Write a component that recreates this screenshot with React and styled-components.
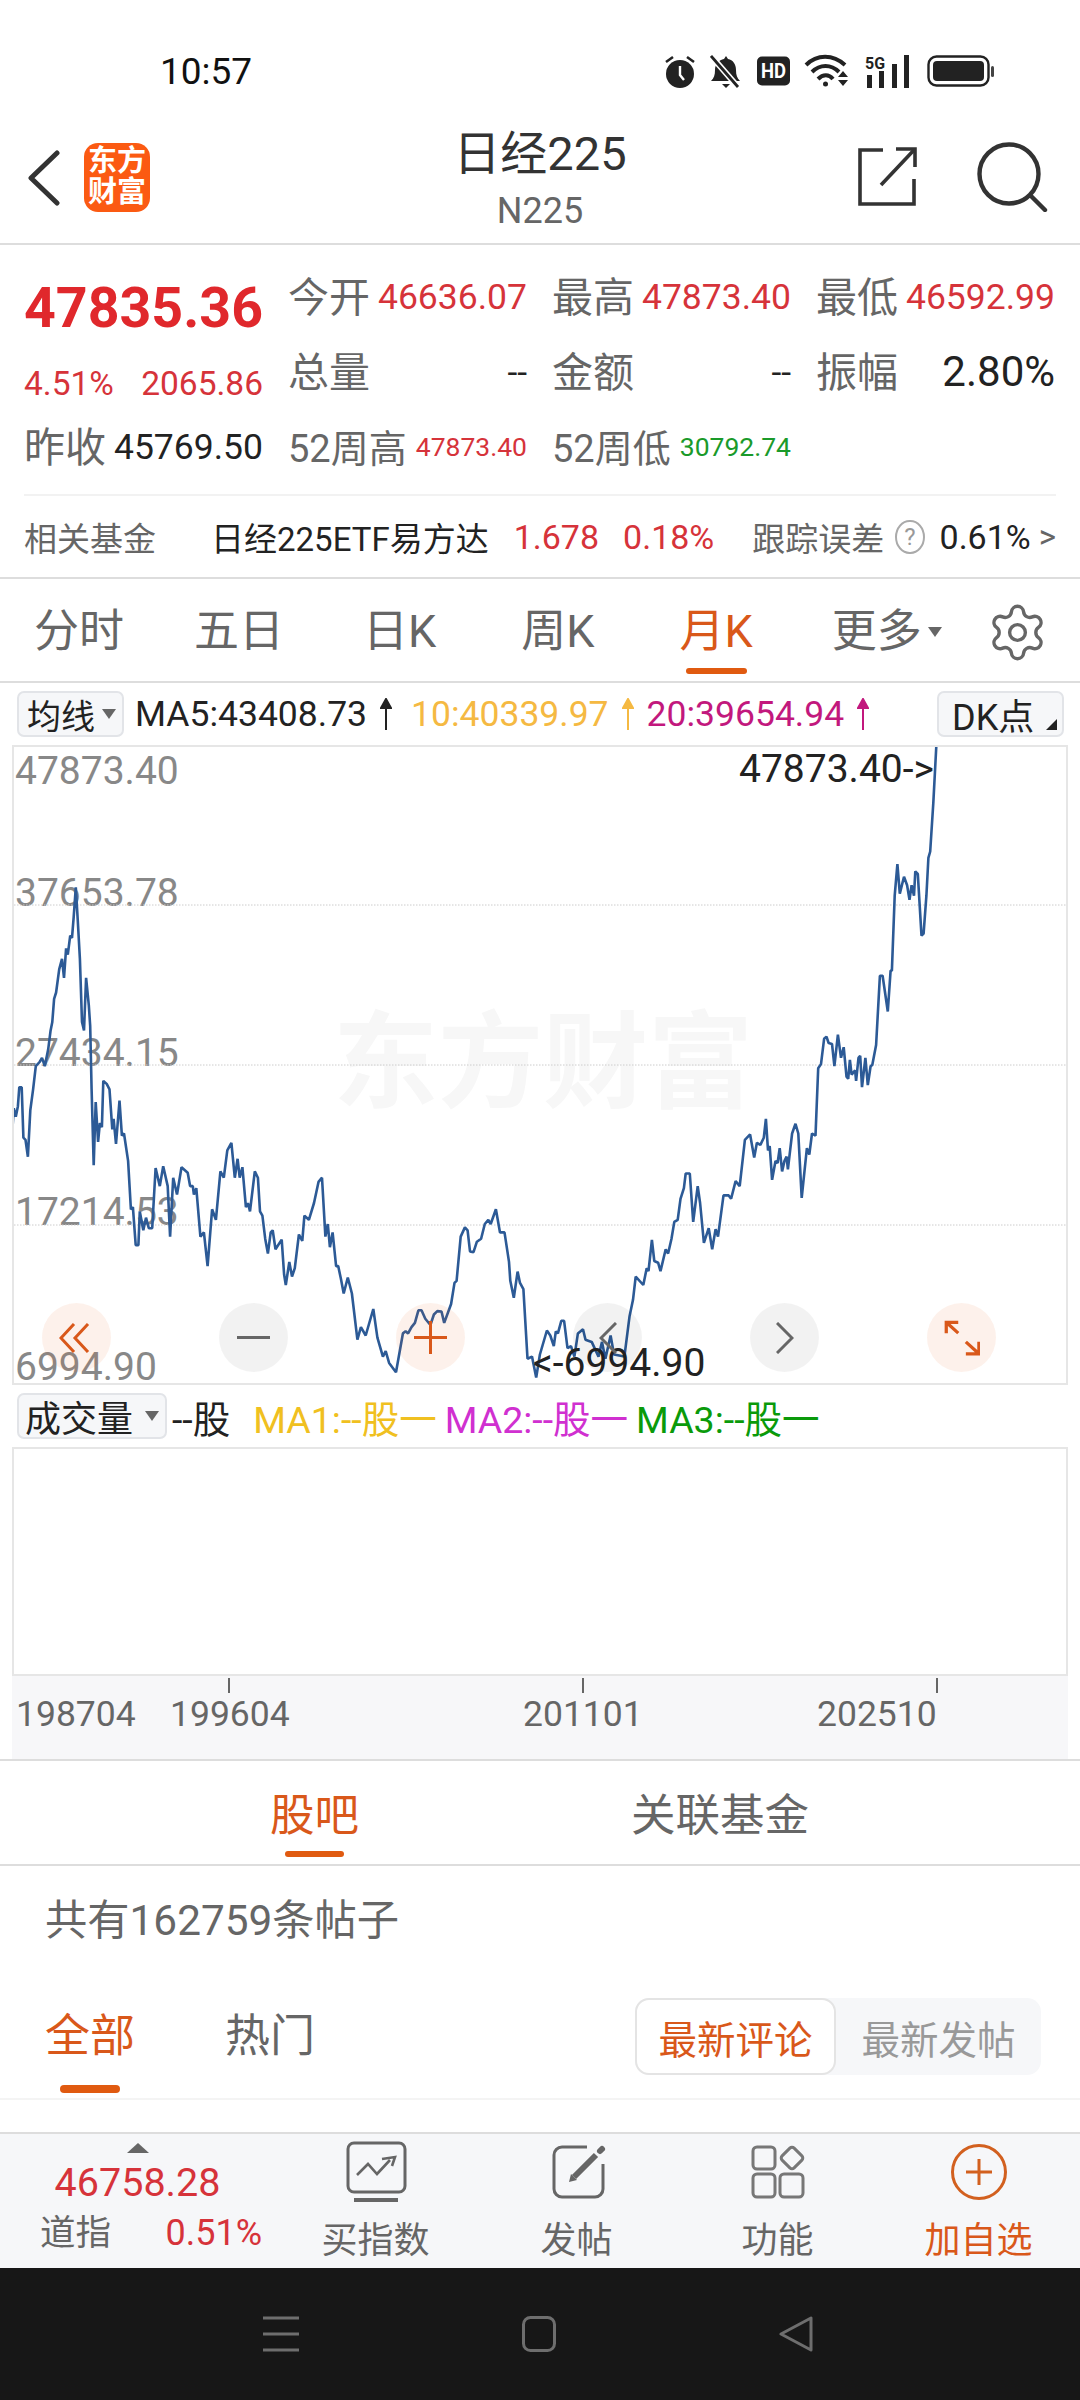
import styled, { createGlobalStyle } from 'styled-components';
import { Settings } from 'lucide-react';

const ORANGE = '#d9581a';
const BAR = '#e05a10';
const RED = '#d6333a';
const GREEN = '#1a9a2a';
const GRAY = '#666';
const DARK = '#222';

const Global = createGlobalStyle`
    html, body {
        margin: 0;
        padding: 0;
        background: #fff;
    }
    body {
        font-family: Roboto, "Noto Sans CJK SC", sans-serif;
        color: ${DARK};
    }
    * {
        box-sizing: border-box;
    }
`;

const Page = styled.div`
    width: 1080px;
    height: 2400px;
    display: flex;
    flex-direction: column;
    overflow: hidden;
    background: #fff;
`;

const StatusBar = styled.div`
    height: 110px;
    flex: none;
    display: flex;
    align-items: center;
    padding: 32px 85px 0 160px;
    font-size: 37px;
    color: #111;
`;

const StatusIcons = styled.div`
    margin-left: auto;
    display: flex;
    align-items: center;
    gap: 14.5px;
    svg {
        display: block;
    }
`;

const Header = styled.div`
    height: 135px;
    flex: none;
    border-bottom: 2px solid #ddd;
    display: flex;
    align-items: center;
    padding: 0 32px 0 27px;
    position: relative;
`;

const BackWrap = styled.div`
    margin-top: 3px;
    svg {
        display: block;
    }
`;

const Logo = styled.div`
    width: 66px;
    height: 69px;
    margin: 2px 0 0 24px;
    background: #fb5a12;
    border-radius: 14px;
    color: #fff;
    font-size: 29px;
    line-height: 31px;
    font-weight: 700;
    text-align: center;
    padding-top: 3px;
`;

const TitleBlock = styled.div`
    flex: 1;
    text-align: center;
    padding-left: 72px;
    margin-top: 4px;
`;

const Title = styled.div`
    font-size: 47px;
    line-height: 56px;
    color: #333;
`;

const Code = styled.div`
    font-size: 36px;
    line-height: 42px;
    color: ${GRAY};
    margin-top: 8px;
`;

const HeaderActions = styled.div`
    display: flex;
    align-items: center;
    gap: 60px;
`;

const QuoteGrid = styled.div`
    display: grid;
    grid-template-columns: repeat(4, 239px);
    column-gap: 25px;
    grid-auto-rows: 75px;
    padding: 14px 0 0 24px;
    height: 240px;
    flex: none;
`;

const Cell = styled.div`
    display: flex;
    align-items: center;
    justify-content: space-between;
    white-space: nowrap;
    padding-top: ${(p) => p.$top || 0}px;
`;

const Price = styled.span`
    font-size: 55.5px;
    font-weight: 700;
    color: #e0282c;
`;

const Label = styled.span`
    font-size: ${(p) => (p.$small ? 38 : 41)}px;
    color: ${GRAY};
    padding-bottom: ${(p) => (p.$small ? 2 : 6)}px;
`;

const Value = styled.span`
    font-size: ${(p) => p.$size || 35.5}px;
    color: ${(p) => p.$color || RED};
`;

const Divider = styled.div`
    height: 2px;
    flex: none;
    margin: 9px 24px 0;
    background: #f2f2f2;
`;

const FundRow = styled.div`
    height: 83px;
    flex: none;
    border-bottom: 2px solid #ddd;
    display: flex;
    align-items: center;
    padding: 0 24px;
    font-size: 33px;
    white-space: nowrap;
`;

const FundText = styled.span`
    color: ${(p) => p.$color || GRAY};
    margin-left: ${(p) => p.$ml || 0}px;
    font-size: ${(p) => p.$size || 33}px;
`;

const HelpDot = styled.span`
    width: 34px;
    height: 34px;
    margin-left: 11px;
    border: 2px solid #aaa;
    border-radius: 50%;
    color: #999;
    font-size: 24px;
    line-height: 30px;
    text-align: center;
`;

const PeriodRow = styled.div`
    height: 104px;
    flex: none;
    border-bottom: 2px solid #ddd;
    display: flex;
    align-items: flex-start;
    padding: 28px 0 0 34px;
`;

const PeriodTab = styled.div`
    margin-left: ${(p) => p.$ml || 0}px;
    display: flex;
    flex-direction: column;
    align-items: center;
    font-size: 45px;
    line-height: 50px;
    color: ${(p) => (p.$active ? ORANGE : GRAY)};
    &::after {
        content: '';
        display: block;
        width: 61px;
        height: 6px;
        margin-top: 11px;
        border-radius: 3px;
        background: ${(p) => (p.$active ? BAR : 'transparent')};
    }
`;

const Caret = styled.span`
    display: inline-block;
    width: 0;
    height: 0;
    border-left: ${(p) => p.$w || 7}px solid transparent;
    border-right: ${(p) => p.$w || 7}px solid transparent;
    border-top: ${(p) => (p.$w || 7) * 1.5}px solid ${GRAY};
`;

const MoreTab = styled(PeriodTab)`
    flex-direction: row;
    align-items: center;
    gap: 6px;
    height: 50px;
    &::after {
        display: none;
    }
`;

const GearWrap = styled.div`
    margin: -6px 0 0 44px;
    color: ${GRAY};
    svg {
        display: block;
    }
`;

const MaRow = styled.div`
    height: 62px;
    flex: none;
    display: flex;
    align-items: center;
    padding: 0 16px 0 17px;
    font-size: 35.5px;
    white-space: nowrap;
`;

const Picker = styled.div`
    width: ${(p) => p.$w}px;
    height: 46px;
    margin-right: ${(p) => p.$mr || 0}px;
    margin-left: ${(p) => (p.$right ? 'auto' : '0')};
    background: #f6f7f9;
    border: 2px solid #e2e4e8;
    border-radius: 7px;
    display: flex;
    align-items: center;
    justify-content: space-between;
    padding: 0 6px 0 ${(p) => p.$pl || 8}px;
    font-size: ${(p) => p.$size || 34}px;
    color: ${DARK};
    position: relative;
`;

const CornerMark = styled.span`
    position: absolute;
    right: 5px;
    bottom: 5px;
    width: 0;
    height: 0;
    border-left: 11px solid transparent;
    border-bottom: 11px solid ${DARK};
`;

const MaText = styled.span`
    color: ${(p) => p.$color};
    margin-left: ${(p) => p.$ml || 0}px;
`;

const Chart = styled.div`
    height: 640px;
    flex: none;
    margin: 0 12px;
    border: 2px solid #e6e6e6;
    position: relative;
    svg.plot {
        position: absolute;
        left: 0;
        top: 0;
    }
`;

const Watermark = styled.div`
    position: absolute;
    left: 319px;
    top: 257px;
    font-size: 105px;
    line-height: 120px;
    font-weight: 700;
    color: #f7f7f7;
    white-space: nowrap;
`;

const AxisLabel = styled.div`
    position: absolute;
    left: 1px;
    top: ${(p) => p.$y - 747 - 16}px;
    font-size: 39px;
    line-height: 32px;
    color: #888;
`;

const Note = styled.div`
    position: absolute;
    left: ${(p) => p.$x - 14}px;
    top: ${(p) => p.$y - 747 - 16}px;
    font-size: 39px;
    line-height: 32px;
    color: ${DARK};
    white-space: nowrap;
`;

const Controls = styled.div`
    position: absolute;
    left: 28px;
    top: 556px;
    display: flex;
    gap: 108px;
`;

const RoundBtn = styled.div`
    width: 69px;
    height: 69px;
    border-radius: 50%;
    background: ${(p) => (p.$hot ? 'rgba(235, 100, 30, 0.09)' : 'rgba(0, 0, 0, 0.05)')};
    display: flex;
    align-items: center;
    justify-content: center;
`;

const VolumeRow = styled.div`
    height: 62px;
    flex: none;
    display: flex;
    align-items: center;
    padding: 0 0 0 17px;
    font-size: 37.5px;
    white-space: nowrap;
`;

const VolumeChart = styled.div`
    height: 229px;
    flex: none;
    margin: 0 12px;
    border: 2px solid #e6e6e6;
`;

const TimeAxis = styled.div`
    height: 85px;
    flex: none;
    border-bottom: 2px solid #ddd;
    position: relative;
    &::before {
        content: '';
        position: absolute;
        left: 12px;
        right: 12px;
        top: 0;
        bottom: 0;
        background: #f7f7f9;
    }
`;

const Tick = styled.div`
    position: absolute;
    left: ${(p) => p.$x}px;
    top: 2px;
    width: 2px;
    height: 15px;
    background: ${GRAY};
`;

const TimeLabel = styled.div`
    position: absolute;
    left: ${(p) => p.$x}px;
    top: 17px;
    font-size: 35.5px;
    line-height: 42px;
    color: ${GRAY};
`;

const ForumTabs = styled.div`
    height: 105px;
    flex: none;
    border-bottom: 2px solid #ddd;
    display: flex;
    gap: 272px;
    padding: 30px 0 0 270px;
`;

const ForumTab = styled.div`
    display: flex;
    flex-direction: column;
    align-items: center;
    font-size: 44.5px;
    line-height: 50px;
    color: ${(p) => (p.$active ? ORANGE : GRAY)};
    &::after {
        content: '';
        display: block;
        width: 59px;
        height: 6px;
        margin-top: 10px;
        border-radius: 3px;
        background: ${(p) => (p.$active ? BAR : 'transparent')};
    }
`;

const PostCount = styled.div`
    height: 110px;
    flex: none;
    padding: 30px 0 0 45px;
    font-size: 42.3px;
    line-height: 50px;
    color: ${GRAY};
`;

const FilterRow = styled.div`
    height: 124px;
    flex: none;
    border-bottom: 2px solid #f4f4f4;
    display: flex;
    align-items: flex-start;
    gap: 90px;
    padding: 36px 39px 0 45px;
    position: relative;
`;

const FilterTab = styled.div`
    display: flex;
    flex-direction: column;
    align-items: center;
    font-size: 45px;
    line-height: 50px;
    color: ${(p) => (p.$active ? ORANGE : GRAY)};
    &::after {
        content: '';
        display: block;
        width: 60px;
        height: 8px;
        margin-top: 23px;
        border-radius: 4px;
        background: ${(p) => (p.$active ? BAR : 'transparent')};
    }
`;

const Segment = styled.div`
    margin: -14px 0 0 auto;
    width: 406px;
    height: 77px;
    display: flex;
    background: #f6f7f9;
    border-radius: 14px;
`;

const SegmentItem = styled.div`
    width: ${(p) => (p.$active ? 201 : 205)}px;
    height: 100%;
    display: flex;
    align-items: center;
    justify-content: center;
    font-size: 38.5px;
    color: ${(p) => (p.$active ? ORANGE : '#999')};
    background: ${(p) => (p.$active ? '#fff' : 'transparent')};
    border: ${(p) => (p.$active ? '2px solid #e4e4e4' : 'none')};
    border-radius: 14px;
`;

const Spacer = styled.div`
    flex: 1;
`;

const BottomBar = styled.div`
    height: 136px;
    flex: none;
    background: #f6f7f9;
    border-top: 2px solid #ddd;
    display: flex;
`;

const IndexBlock = styled.div`
    width: 275px;
    flex: none;
    display: flex;
    flex-direction: column;
    align-items: center;
    padding-top: 9px;
`;

const UpCaret = styled.span`
    width: 0;
    height: 0;
    border-left: 11px solid transparent;
    border-right: 11px solid transparent;
    border-bottom: 10px solid ${GRAY};
`;

const IndexValue = styled.div`
    font-size: 39.5px;
    line-height: 44px;
    margin-top: 8px;
    color: ${RED};
`;

const IndexRow = styled.div`
    width: 100%;
    display: flex;
    justify-content: space-between;
    padding: 0 13px 0 40px;
    margin-top: 6px;
    line-height: 44px;
`;

const IndexName = styled.span`
    font-size: 35.5px;
    color: ${GRAY};
`;

const IndexPct = styled.span`
    font-size: 36px;
    color: ${RED};
`;

const BarItem = styled.div`
    width: 201px;
    flex: none;
    display: flex;
    flex-direction: column;
    align-items: center;
    padding-top: 6px;
    font-size: 36px;
    line-height: 44px;
    color: ${(p) => (p.$hot ? ORANGE : GRAY)};
    svg {
        display: block;
        margin-bottom: 15px;
    }
`;

const NavBar = styled.div`
    height: 132px;
    flex: none;
    background: #171717;
    display: flex;
    align-items: center;
    justify-content: center;
    gap: 223px;
    padding-right: 5px;
`;

// traced from the reference, two halves in crop coordinates
const LEFT_PTS = [36,925,40,875,46,895,52,870,56,825,63,825,68,945,74,950,81,990,88,880,96,830,104,775,115,765,122,755,130,775,140,735,147,690,152,670,157,615,163,600,172,545,180,520,186,565,192,495,197,510,204,465,209,470,214,420,220,350,226,430,232,520,238,670,244,690,250,565,258,630,262,680,266,830,272,1010,278,860,285,955,290,910,296,920,300,810,310,817,318,830,326,925,330,900,337,960,347,857,354,940,360,935,372,1000,380,1115,386,1110,394,1200,402,1200,406,1120,416,1165,424,1135,432,1160,442,1160,452,1017,464,1060,474,1013,487,1060,494,1180,503,1040,514,1080,527,1015,545,1028,552,1060,560,1060,563,1080,570,1065,582,1180,592,1170,603,1250,616,1115,627,1140,640,1025,650,1040,660,975,672,957,682,1040,690,995,696,1040,704,1015,714,1110,720,1100,726,1120,740,1025,749,1040,755,1120,762,1130,770,1185,778,1220,786,1170,792,1165,800,1210,818,1187,825,1270,830,1295,840,1240,848,1275,856,1255,868,1175,878,1190,884,1130,897,1140,912,1100,925,1050,935,1040,945,1180,952,1150,958,1205,966,1170,976,1250,982,1250,990,1280,998,1315,1010,1277,1022,1315,1038,1425,1048,1395,1062,1415,1084,1352,1096,1420,1112,1465,1120,1452,1130,1480,1150,1502,1170,1410,1178,1405,1185,1410,1195,1395,1205,1385,1215,1355,1224,1355,1235,1375,1250,1390,1260,1365,1270,1357,1282,1358,1290,1385,1310,1340,1320,1290,1326,1285,1338,1180,1350,1158,1358,1165,1365,1215,1375,1217,1385,1192,1397,1185,1408,1150,1418,1140,1425,1150,1440,1115,1452,1170,1465,1170,1478,1240,1482,1285,1492,1325,1503,1263,1510,1290,1520,1305,1532,1470,1545,1465,1557,1515,1568,1460];
const RIGHT_PTS = [20,1403,30,1415,40,1440,46,1405,52,1410,62,1380,70,1380,80,1445,90,1440,100,1465,110,1410,125,1400,132,1425,150,1430,170,1465,180,1430,190,1470,205,1415,215,1460,245,1465,260,1370,270,1330,278,1275,300,1295,310,1255,315,1262,325,1188,332,1238,343,1242,350,1262,365,1210,372,1220,382,1185,390,1145,400,1140,408,1090,418,1065,423,1030,435,1030,445,1145,458,1060,465,1100,476,1195,490,1160,500,1210,510,1162,517,1180,533,1082,548,1082,555,1090,568,1048,580,1060,595,950,610,937,622,992,630,957,640,962,650,945,656,900,662,975,667,965,674,1045,684,1000,690,1005,696,970,703,1025,710,1000,716,990,720,1020,732,935,742,912,750,935,760,1088,775,970,782,985,790,935,800,940,808,780,816,770,825,710,832,705,838,720,848,722,855,775,865,700,874,755,882,730,890,800,895,805,900,760,905,795,915,785,918,810,925,755,930,750,935,825,945,755,952,820,960,775,965,772,976,725,987,560,995,560,1010,645,1018,548,1022,548,1030,370,1038,295,1045,365,1057,325,1066,345,1073,380,1079,345,1086,370,1090,312,1097,318,1108,465,1114,460,1122,370,1128,280,1133,265,1142,150,1151,15];

const toPage = (pts, dx) => {
    const out = [];
    for (let i = 0; i < pts.length; i += 2) {
        out.push(`${(pts[i] / 2.904 + dx).toFixed(1)},${(740 + pts[i + 1] / 2.376).toFixed(1)}`);
    }
    return out;
};
const LINE = [...toPage(LEFT_PTS, 0), ...toPage(RIGHT_PTS, 540)].join(' ');

const Alarm = () => (
    <svg width="32" height="35" viewBox="0 0 32 35">
        <circle cx="16" cy="20" r="14" fill="#222" />
        <path d="M16 12v9l4 5" fill="none" stroke="#fff" strokeWidth="2.4" />
        <path d="M2 8l7-5M30 8l-7-5" stroke="#222" strokeWidth="2.6" />
    </svg>
);

const BellOff = () => (
    <svg width="32" height="35" viewBox="0 0 32 35">
        <path d="M1 27c3-3 4-6 4-11 0-6 4-10 9-11l2-3 2 3c5 1 8 5 8 11 0 5 1 8 4 11z" fill="#222" />
        <path d="M12 30h8l-4 4z" fill="#222" />
        <path d="M2 3l26 30" stroke="#fff" strokeWidth="6" />
        <path d="M1 2l27 31" stroke="#222" strokeWidth="2.8" />
    </svg>
);

const Hd = () => (
    <svg width="33" height="30" viewBox="0 0 33 30">
        <rect width="33" height="29" y="0.5" rx="5" fill="#222" />
        <text x="16.5" y="22" textAnchor="middle" fontSize="20" fontWeight="700" fontFamily="Roboto" fill="#fff" textLength="25" lengthAdjust="spacingAndGlyphs">HD</text>
    </svg>
);

const Wifi = () => (
    <svg width="46" height="34" viewBox="0 0 46 34" fill="none" stroke="#222" strokeWidth="4">
        <path d="M2 11C13 0 29 0 41 11" />
        <path d="M8 18C16 10 27 10 35 18" />
        <path d="M14 25C19 20 25 20 29 25" />
        <circle cx="21.5" cy="30" r="2.5" fill="#222" stroke="none" />
        <path d="M34 23l5-6 5 6zM34 26l5 6 5-6z" fill="#222" stroke="none" />
    </svg>
);

const Signal = () => (
    <svg width="48" height="34" viewBox="0 0 48 34" style={{ overflow: 'visible' }}>
        <text x="0" y="15" fontSize="17" fontWeight="700" fontFamily="Roboto" fill="#222" textLength="20" lengthAdjust="spacingAndGlyphs">5G</text>
        <path d="M2 21h5v13H2zM14 17h5v17h-5zM27 10h5v24h-5zM39 1h5v33h-5z" fill="#222" />
    </svg>
);

const Battery = () => (
    <svg width="68" height="32" viewBox="0 0 68 32">
        <rect x="1.5" y="1.5" width="60" height="29" rx="8" fill="none" stroke="#222" strokeWidth="2.4" />
        <rect x="6" y="6" width="51" height="20" rx="4" fill="#222" />
        <rect x="64" y="11" width="3" height="11" rx="1.5" fill="#444" />
    </svg>
);

const BackIcon = () => (
    <svg width="33" height="56" viewBox="0 0 33 56" fill="none" stroke="#333" strokeWidth="5" strokeLinecap="round" strokeLinejoin="round">
        <path d="M30 3L4 28l26 25" />
    </svg>
);

const ShareIcon = () => (
    <svg width="59" height="59" viewBox="0 0 59 59" fill="none" stroke="#333" strokeWidth="3.6">
        <path d="M25 3H2v54h54V32" />
        <path d="M23 38L56 3" />
        <path d="M38 2h19v18" />
    </svg>
);

const SearchIcon = () => (
    <svg width="71" height="70" viewBox="0 0 71 70" fill="none" stroke="#333" strokeWidth="4.4" strokeLinecap="round">
        <circle cx="32" cy="32" r="29.5" />
        <path d="M54 54l14 14" />
    </svg>
);

const UpArrow = ({ color }) => (
    <svg width="12" height="32" viewBox="0 0 12 32" style={{ marginLeft: 13 }}>
        <path d="M6 32V3M1 10l5-9 5 9z" stroke={color} strokeWidth="2" fill={color} />
    </svg>
);

const stroke = (c) => ({ fill: 'none', stroke: c, strokeWidth: 3 });

const PricePlot = () => (
    <svg className="plot" width="1052" height="636" viewBox="14 747 1052 636">
        <path d="M14 905H1066M14 1065H1066M14 1225H1066" stroke="#ccc" strokeWidth="1" strokeDasharray="1.5 1.5" />
        <polyline points={LINE} fill="none" stroke="#2c5a96" strokeWidth="2.6" strokeLinejoin="bevel" />
    </svg>
);

const App = () => {
    return (
        <Page>
            <Global />
            <StatusBar>
                10:57
                <StatusIcons>
                    <Alarm />
                    <BellOff />
                    <Hd />
                    <Wifi />
                    <Signal />
                    <Battery />
                </StatusIcons>
            </StatusBar>

            <Header>
                <BackWrap><BackIcon /></BackWrap>
                <Logo>东方<br />财富</Logo>
                <TitleBlock>
                    <Title>日经225</Title>
                    <Code>N225</Code>
                </TitleBlock>
                <HeaderActions>
                    <ShareIcon />
                    <SearchIcon />
                </HeaderActions>
            </Header>

            <QuoteGrid>
                <Cell $top={24}><Price>47835.36</Price></Cell>
                <Cell><Label>今开</Label><Value>46636.07</Value></Cell>
                <Cell><Label>最高</Label><Value>47873.40</Value></Cell>
                <Cell><Label>最低</Label><Value>46592.99</Value></Cell>
                <Cell $top={24}><Value $size={33.5}>4.51%</Value><Value $size={33.5}>2065.86</Value></Cell>
                <Cell><Label>总量</Label><Value $color={DARK}>--</Value></Cell>
                <Cell><Label>金额</Label><Value $color={DARK}>--</Value></Cell>
                <Cell><Label>振幅</Label><Value $color={DARK} $size={42}>2.80%</Value></Cell>
                <Cell><Label>昨收</Label><Value $color={DARK}>45769.50</Value></Cell>
                <Cell><Label $small>52周高</Label><Value $size={26.5}>47873.40</Value></Cell>
                <Cell><Label $small>52周低</Label><Value $size={26.5} $color={GREEN}>30792.74</Value></Cell>
            </QuoteGrid>
            <Divider />
            <FundRow>
                <FundText>相关基金</FundText>
                <FundText $color={DARK} $ml={55}>日经225ETF易方达</FundText>
                <FundText $color={RED} $ml={25} $size={34}>1.678</FundText>
                <FundText $color={RED} $ml={24} $size={34}>0.18%</FundText>
                <FundText $ml={38}>跟踪误差</FundText>
                <HelpDot>?</HelpDot>
                <FundText $color={DARK} $ml={15} $size={34}>0.61%</FundText>
                <FundText $ml={8}>&gt;</FundText>
            </FundRow>

            <PeriodRow>
                <PeriodTab>分时</PeriodTab>
                <PeriodTab $ml={70}>五日</PeriodTab>
                <PeriodTab $ml={79}>日K</PeriodTab>
                <PeriodTab $ml={85}>周K</PeriodTab>
                <PeriodTab $ml={85} $active>月K</PeriodTab>
                <MoreTab $ml={79}>更多<Caret /></MoreTab>
                <GearWrap><Settings size={63} strokeWidth={1.3} /></GearWrap>
            </PeriodRow>

            <MaRow>
                <Picker $w={107} $mr={11}>均线<Caret /></Picker>
                <MaText $color={DARK}>MA5:43408.73</MaText>
                <UpArrow color={DARK} />
                <MaText $color="#f5b942" $ml={19}>10:40339.97</MaText>
                <UpArrow color="#f5b942" />
                <MaText $color="#c2187d" $ml={13}>20:39654.94</MaText>
                <UpArrow color="#c2187d" />
                <Picker $w={127} $right $size={36}>
                    <span style={{ marginLeft: 5 }}>DK点</span>
                    <CornerMark />
                </Picker>
            </MaRow>

            <Chart>
                <Watermark>东方财富</Watermark>
                <AxisLabel $y={771}>47873.40</AxisLabel>
                <AxisLabel $y={893}>37653.78</AxisLabel>
                <AxisLabel $y={1053}>27434.15</AxisLabel>
                <AxisLabel $y={1212}>17214.53</AxisLabel>
                <AxisLabel $y={1367}>6994.90</AxisLabel>
                <PricePlot />
                <Note $x={739} $y={769}>47873.40-&gt;</Note>
                <Note $x={533} $y={1363}>&lt;-6994.90</Note>
                <Controls>
                    <RoundBtn $hot>
                        <svg width="32" height="30" viewBox="0 0 32 30" {...stroke(ORANGE)} style={{ marginRight: 4 }}>
                            <path d="M15 1L2 15l13 14M29 1L16 15l13 14" />
                        </svg>
                    </RoundBtn>
                    <RoundBtn>
                        <svg width="33" height="3" viewBox="0 0 33 3"><path d="M0 1.5h33" stroke={GRAY} strokeWidth="3" /></svg>
                    </RoundBtn>
                    <RoundBtn $hot>
                        <svg width="33" height="33" viewBox="0 0 33 33" {...stroke(ORANGE)}><path d="M0 16.5h33M16.5 0v33" /></svg>
                    </RoundBtn>
                    <RoundBtn>
                        <svg width="18" height="32" viewBox="0 0 18 32" {...stroke(GRAY)}><path d="M17 1L2 16l15 15" /></svg>
                    </RoundBtn>
                    <RoundBtn>
                        <svg width="18" height="32" viewBox="0 0 18 32" {...stroke(GRAY)}><path d="M1 1l15 15L1 31" /></svg>
                    </RoundBtn>
                    <RoundBtn $hot>
                        <svg width="37" height="37" viewBox="0 0 34 34" {...stroke(ORANGE)}>
                            <path d="M3 13V3h11M3 3l11 10M33 21v11H21M33 32L21 21" />
                        </svg>
                    </RoundBtn>
                </Controls>
            </Chart>

            <VolumeRow>
                <Picker $w={150} $mr={5} $size={36} $pl={6}>成交量<Caret /></Picker>
                <MaText $color={DARK}>--股</MaText>
                <MaText $color="#f0c020" $ml={23}>MA1:--股一</MaText>
                <MaText $color="#d030d0" $ml={8}>MA2:--股一</MaText>
                <MaText $color="#0a9a0a" $ml={8}>MA3:--股一</MaText>
            </VolumeRow>
            <VolumeChart />
            <TimeAxis>
                <Tick $x={228} />
                <Tick $x={582} />
                <Tick $x={936} />
                <TimeLabel $x={16}>198704</TimeLabel>
                <TimeLabel $x={170}>199604</TimeLabel>
                <TimeLabel $x={523}>201101</TimeLabel>
                <TimeLabel $x={817}>202510</TimeLabel>
            </TimeAxis>

            <ForumTabs>
                <ForumTab $active>股吧</ForumTab>
                <ForumTab>关联基金</ForumTab>
            </ForumTabs>
            <PostCount>共有162759条帖子</PostCount>
            <FilterRow>
                <FilterTab $active>全部</FilterTab>
                <FilterTab>热门</FilterTab>
                <Segment>
                    <SegmentItem $active>最新评论</SegmentItem>
                    <SegmentItem>最新发帖</SegmentItem>
                </Segment>
            </FilterRow>
            <Spacer />

            <BottomBar>
                <IndexBlock>
                    <UpCaret />
                    <IndexValue>46758.28</IndexValue>
                    <IndexRow>
                        <IndexName>道指</IndexName>
                        <IndexPct>0.51%</IndexPct>
                    </IndexRow>
                </IndexBlock>
                <BarItem>
                    <svg width="72" height="64" viewBox="0 0 72 64" fill="none" stroke={GRAY} strokeWidth="3">
                        <rect x="8" y="3" width="57" height="49" rx="6" />
                        <path d="M14 60h44" strokeWidth="4" />
                        <path d="M17 35l11-11 9 10 13-14M42 19l13-2-3 9" strokeWidth="2.6" />
                    </svg>
                    买指数
                </BarItem>
                <BarItem>
                    <svg width="72" height="64" viewBox="0 0 72 64" fill="none" stroke={GRAY} strokeWidth="3">
                        <path d="M46 7H21a8 8 0 0 0-8 8v34a8 8 0 0 0 8 8h33a8 8 0 0 0 8-8V24" />
                        <path d="M33 37l22-22" strokeWidth="6" />
                        <path d="M28 42l2-8 6 6z" fill={GRAY} stroke="none" />
                        <path d="M59 11l2-2" strokeWidth="6" strokeLinecap="round" />
                    </svg>
                    发帖
                </BarItem>
                <BarItem>
                    <svg width="72" height="64" viewBox="0 0 72 64" fill="none" stroke="#777" strokeWidth="3">
                        <rect x="11" y="7" width="22" height="22" rx="4" />
                        <rect x="11" y="34" width="22" height="23" rx="4" />
                        <rect x="38" y="34" width="23" height="23" rx="4" />
                        <rect x="41.5" y="9.5" width="17" height="17" rx="3" transform="rotate(45 50 18)" />
                    </svg>
                    功能
                </BarItem>
                <BarItem $hot>
                    <svg width="72" height="64" viewBox="0 0 72 64" fill="none" stroke="#d2601f" strokeWidth="3">
                        <circle cx="36" cy="32" r="26.5" />
                        <path d="M23 32h26M36 19v26" />
                    </svg>
                    加自选
                </BarItem>
            </BottomBar>

            <NavBar>
                <svg width="36" height="36" viewBox="0 0 36 36"><path d="M0 2h36M0 18h36M0 34h36" stroke="#6e6e6e" strokeWidth="3" /></svg>
                <svg width="34" height="36" viewBox="0 0 34 36"><rect x="1.5" y="1.5" width="31" height="33" rx="7" fill="none" stroke="#6e6e6e" strokeWidth="3" /></svg>
                <svg width="34" height="36" viewBox="0 0 34 36"><path d="M32 2v32L2 18z" fill="none" stroke="#6e6e6e" strokeWidth="3" strokeLinejoin="round" /></svg>
            </NavBar>
        </Page>
    );
};

export default App;
